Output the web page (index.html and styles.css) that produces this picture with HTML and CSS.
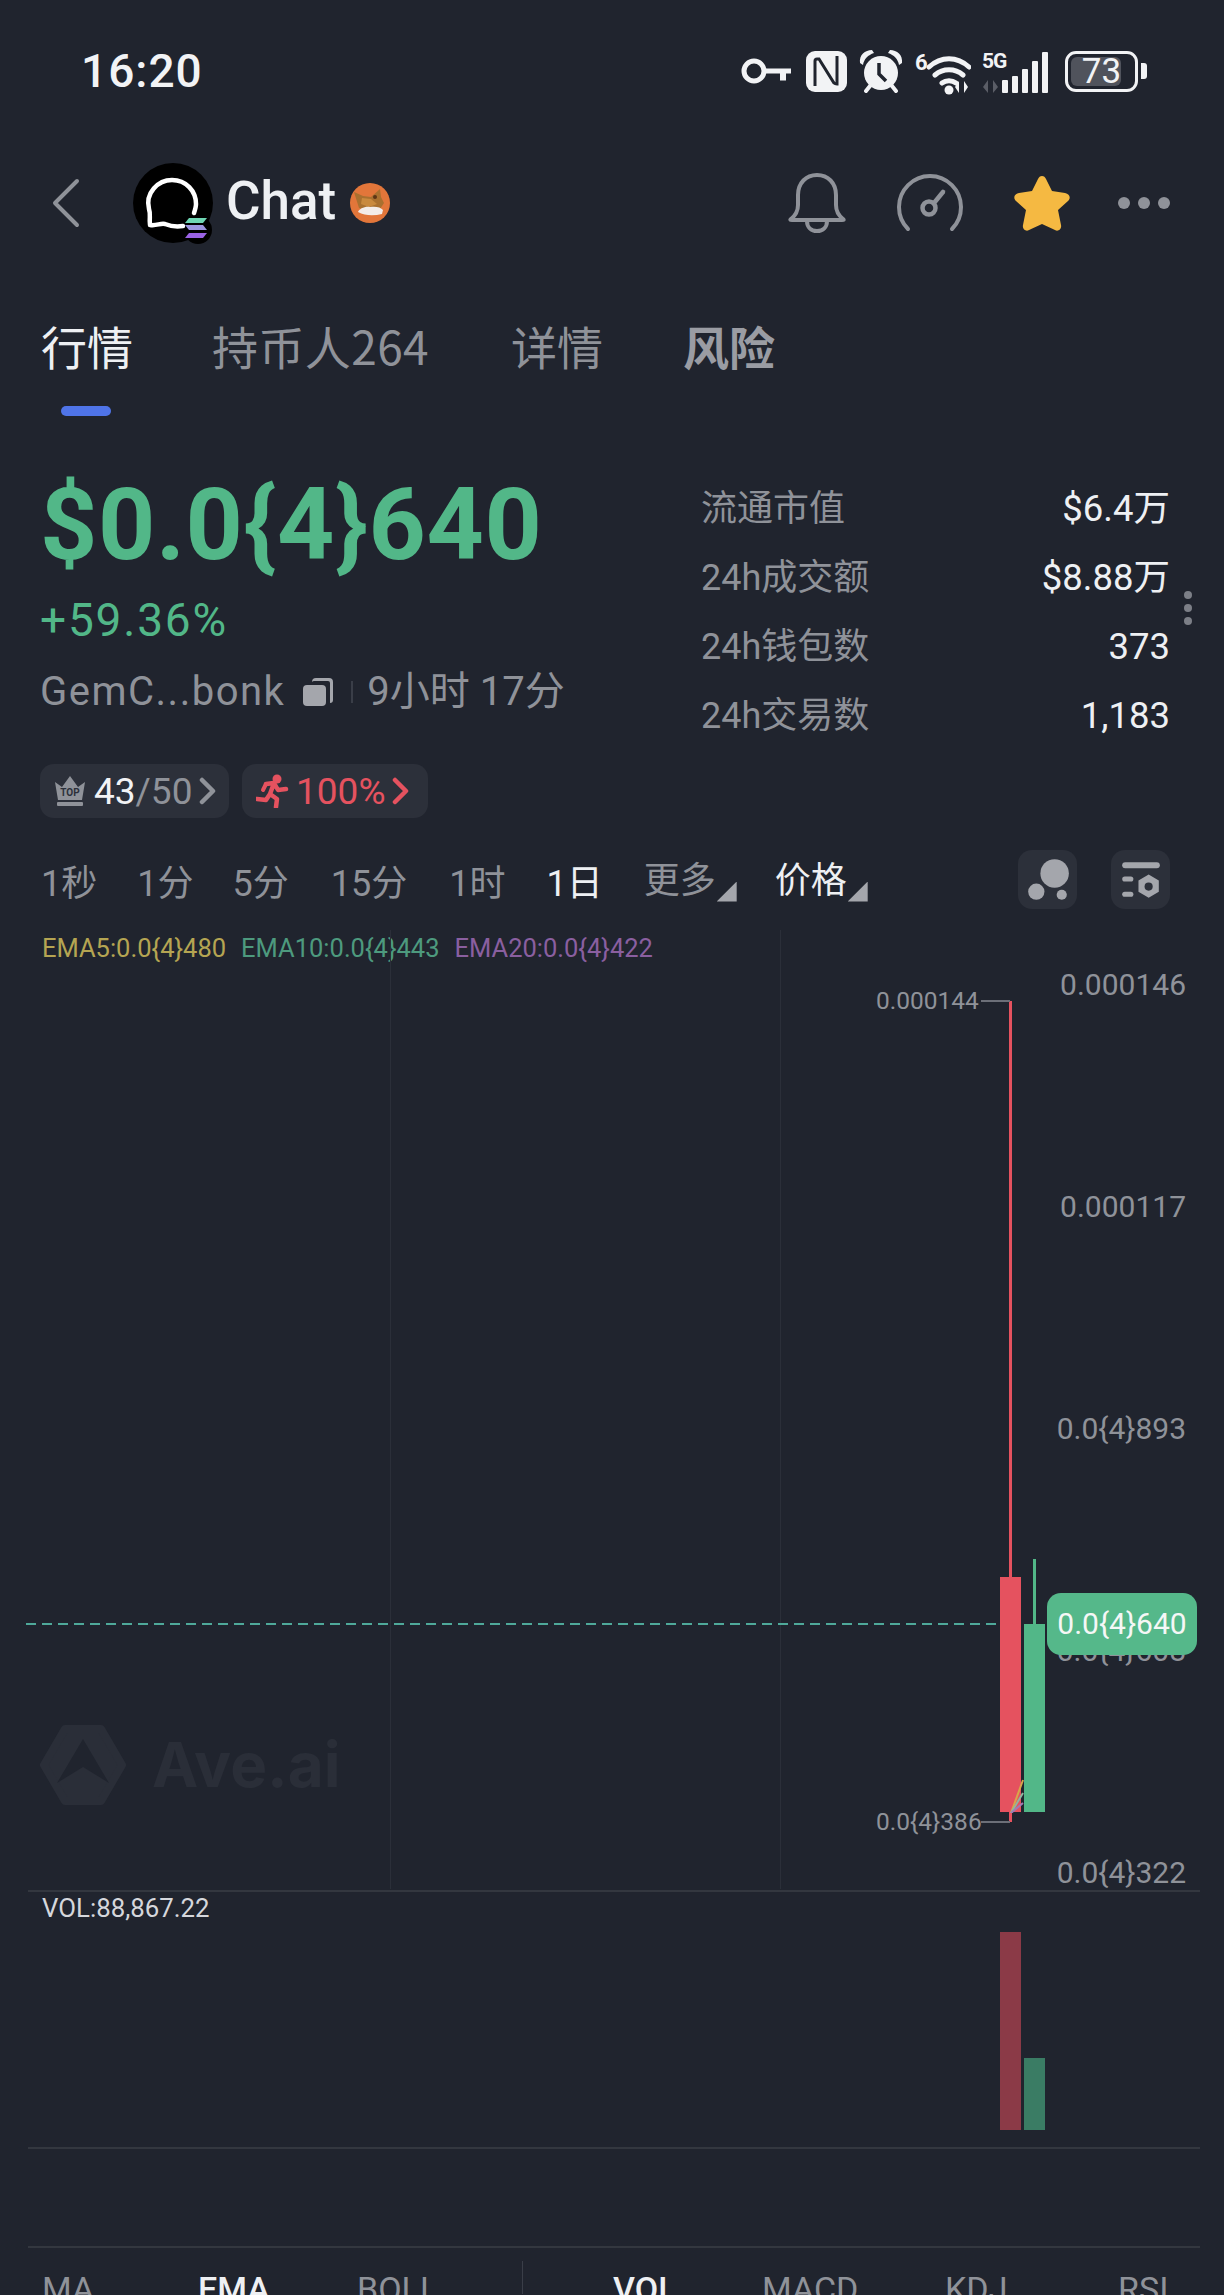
FILE: index.html
```html
<!DOCTYPE html>
<html lang="zh">
<head>
<meta charset="utf-8">
<title>Chat</title>
<link rel="stylesheet" href="styles.css">
</head>
<body>
<div class="page">
  <div class="status">
    <span class="time">16:20</span>
    <div class="status-icons">
      <svg class="si-key" viewBox="0 0 50 28"><circle cx="13" cy="14" r="10" fill="none" stroke="#f2f3f5" stroke-width="5"/><path d="M23 11.500h27v5h-5v7h-6v-7h-16z" fill="#f2f3f5"/></svg>
      <svg class="si-nfc" viewBox="0 0 41 41"><rect width="41" height="41" rx="9" fill="#f2f3f5"/><path d="M9 35V10q0-2 2-2h2l15 24q1 1 3 1V5" fill="none" stroke="#20242e" stroke-width="3"/></svg>
      <svg class="si-alarm" viewBox="0 0 44 44"><circle cx="22" cy="24" r="17" fill="#f2f3f5"/><path d="M1 14C0 6 6 1 13 1l2 3C9 6 5 10 4 16zM43 14c1-8-5-13-12-13l-2 3c6 2 10 6 11 12z" fill="#f2f3f5"/><path d="M11 37l-4 5M33 37l4 5" fill="none" stroke="#f2f3f5" stroke-width="4" stroke-linecap="round"/><path d="M20 14v11l7 7" fill="none" stroke="#20242e" stroke-width="3.500"/></svg>
      <svg class="si-wifi" viewBox="0 -4 56 48"><text x="0" y="19" class="si-mini">6</text><path d="M14 16c12-11 28-11 40 0M20 24c8-7 20-7 28 0M27 32c4-3 10-3 14 0" fill="none" stroke="#f2f3f5" stroke-width="5" stroke-linecap="round"/><circle cx="34" cy="39" r="4.500" fill="#f2f3f5"/><path d="M44 42v-12l-4 6zM49 30v12l4-6z" fill="#f2f3f5"/></svg>
      <svg class="si-signal" viewBox="0 -4 66 46"><text x="0" y="16" class="si-mini si-5g">5G</text><path d="M6 41V28l-5 7zM11 28v13l5-6z" fill="#5a5d66"/><rect x="20" y="28" width="6" height="13" rx="1" fill="#f2f3f5"/><rect x="30" y="24" width="6" height="17" rx="1" fill="#f2f3f5"/><rect x="40" y="17" width="6" height="24" rx="1" fill="#f2f3f5"/><rect x="50" y="9" width="6" height="32" rx="1" fill="#f2f3f5"/><rect x="60" y="0" width="6" height="41" rx="1" fill="#f2f3f5"/></svg>
      <div class="battery"><div class="battery-fill"></div><span class="battery-num">73</span><span class="battery-nub"></span></div>
    </div>
  </div>

  <div class="nav">
    <svg class="back" viewBox="0 0 28 50"><path d="M25 3 3 25l22 22" fill="none" stroke="#8f9299" stroke-width="4" stroke-linecap="round" stroke-linejoin="round"/></svg>
    <svg class="avatar" viewBox="0 0 84 84"><circle cx="40" cy="40" r="40" fill="#000"/><circle cx="65" cy="67" r="14" fill="#000"/><path d="M17 62c-1-8 1-10-1-16-4-16 9-29 23-29 14 0 24 11 24 24 0 3-1 6-2 9M17 62c7 1 10-2 15-1 5 2 12 3 18 2" fill="none" stroke="#fff" stroke-width="4.500" stroke-linecap="round" stroke-linejoin="round"/><path d="M56 55h18l-4 5H52z" fill="#6fd6b4"/><path d="M52 62h18l4 5H56z" fill="#9d95e0"/><path d="M56 70h18l-4 5H52z" fill="#9a62e4"/></svg>
    <span class="token-name">Chat</span>
    <svg class="fox" viewBox="0 0 40 40"><circle cx="20" cy="20" r="20" fill="#e2763a"/><path d="M4 9l9 4 8 1 9-8 1 8 3 6-4 6-10 2-11-3z" fill="#a9702f"/><path d="M12 15l9 1 6 5-8 3-8-3z" fill="#c98a3e"/><path d="M8 29c1-3 7-6 12-5 5-1 11 0 13 3l-1 4c-8 2-17 2-24-2z" fill="#f3ece8"/><circle cx="25" cy="14" r="2" fill="#5c3415"/></svg>
    <div class="nav-actions">
      <svg class="bell" viewBox="0 0 60 60"><path d="M4 46c5-4 7-8 7-14V22C11 10 19 2 30 2s19 8 19 20v10c0 6 2 10 7 14 1 1 1 1-1 1H5c-2 0-2 0-1-1zM20 48c0 6 4 10 10 10s10-4 10-10" fill="none" stroke="#8f9299" stroke-width="4" stroke-linejoin="round"/></svg>
      <svg class="gauge" viewBox="0 0 66 58"><path d="M11 55C5 49 2 41 2 33 2 16 16 2 33 2s31 14 31 31c0 8-3 16-9 22" fill="none" stroke="#8f9299" stroke-width="4" stroke-linecap="round"/><circle cx="32" cy="34" r="6.500" fill="none" stroke="#8f9299" stroke-width="4.500"/><path d="M37 29l9-11" stroke="#8f9299" stroke-width="4.500" stroke-linecap="round"/></svg>
      <svg class="star" viewBox="0 0 58 58"><path d="M29 2c2 0 3 1 4 3l6 12 13 2c5 1 6 5 3 8l-10 9 3 15c1 4-3 7-6 5l-13-6-13 6c-3 2-7-1-6-5l3-15-10-9c-3-3-2-7 3-8l13-2 6-12c1-2 2-3 4-3z" fill="#f5b942"/></svg>
      <div class="more"><i></i><i></i><i></i></div>
    </div>
  </div>

  <div class="tabs">
    <div class="tab tab-active">行情<span class="tab-bar"></span></div>
    <div class="tab tab-holders">持币人264</div>
    <div class="tab tab-detail">详情</div>
    <div class="tab tab-risk">风险</div>
  </div>

  <div class="summary">
    <div class="summary-left">
      <div class="price">$0.0{4}640</div>
      <div class="change">+59.36%</div>
      <div class="token-line">
        <span class="token-addr">GemC...bonk</span>
        <svg class="copy" viewBox="0 0 30 30"><path d="M9 5a4 4 0 0 1 4-4h13a4 4 0 0 1 4 4v18a3 3 0 0 1-3 3V6a2 2 0 0 0-2-2H11a3 3 0 0 0-2 1z" fill="#a4a6ac"/><rect x="0" y="8" width="23" height="21" rx="4" fill="#a4a6ac"/></svg>
        <i class="token-sep"></i>
        <span>9小时 17分</span>
      </div>
    </div>
    <div class="stats">
      <div class="stat"><span>流通市值</span><b>$6.4万</b></div>
      <div class="stat"><span>24h成交额</span><b>$8.88万</b></div>
      <div class="stat"><span>24h钱包数</span><b>373</b></div>
      <div class="stat"><span>24h交易数</span><b>1,183</b></div>
      <div class="vdots"><i></i><i></i><i></i></div>
    </div>
  </div>

  <div class="badges">
    <div class="badge badge-top">
      <svg class="crown" viewBox="0 0 32 32"><path d="M1 7l7 5 8-11 8 11 7-5-3 18H4z" fill="#8f9299"/><rect x="3" y="27" width="26" height="4" rx="1" fill="#8f9299"/><text x="16" y="21" class="crown-text">TOP</text></svg>
      <span class="b-white">43</span><span class="b-grey">/50</span>
      <svg class="chev" viewBox="0 0 17 28"><path d="M3 3l11 11-11 11" fill="none" stroke="#8f9299" stroke-width="4.500" stroke-linecap="round" stroke-linejoin="round"/></svg>
    </div>
    <div class="badge badge-run">
      <svg class="runner" viewBox="0 0 34 34"><circle cx="21" cy="5" r="4.500" fill="#e5525f"/><path d="M10 10l8-1 4 7 8-1M18 9l-4 11 7 5-1 8M14 20l-4 6-9-1" fill="none" stroke="#e5525f" stroke-width="4.500" stroke-linecap="round" stroke-linejoin="round"/><path d="M10 10l-3 6" stroke="#e5525f" stroke-width="4" stroke-linecap="round"/></svg>
      <span class="b-red">100%</span>
      <svg class="chev" viewBox="0 0 17 28"><path d="M3 3l11 11-11 11" fill="none" stroke="#e5525f" stroke-width="4.500" stroke-linecap="round" stroke-linejoin="round"/></svg>
    </div>
  </div>

  <div class="intervals">
    <span class="iv iv-1">1秒</span>
    <span class="iv iv-2">1分</span>
    <span class="iv iv-3">5分</span>
    <span class="iv iv-4">15分</span>
    <span class="iv iv-5">1时</span>
    <span class="iv iv-6 iv-on">1日</span>
    <span class="iv iv-7 iv-drop">更多<i class="tri"></i></span>
    <span class="iv iv-8 iv-drop iv-on">价格<i class="tri"></i></span>
    <div class="tool-btns">
      <div class="tool"><svg viewBox="0 0 58 58"><circle cx="36" cy="23" r="14" fill="#a4a6ac"/><circle cx="18" cy="41" r="8" fill="#a4a6ac"/><circle cx="43" cy="44" r="5" fill="#a4a6ac"/></svg></div>
      <div class="tool"><svg viewBox="0 0 58 58"><rect x="11" y="12" width="37" height="6" rx="3" fill="#a4a6ac"/><rect x="11" y="26" width="11" height="5" rx="2.500" fill="#a4a6ac"/><rect x="11" y="41" width="11" height="5" rx="2.500" fill="#a4a6ac"/><path d="M37 24l10 6v11l-10 6-10-6V30z" fill="#a4a6ac"/><circle cx="37" cy="36" r="4" fill="#2c303a"/></svg></div>
    </div>
  </div>

  <div class="chart">
    <div class="ema-row">
      <span class="ema5">EMA5:0.0{4}480</span>
      <span class="ema10">EMA10:0.0{4}443</span>
      <span class="ema20">EMA20:0.0{4}422</span>
    </div>
    <i class="grid-v gv1"></i><i class="grid-v gv2"></i>
    <i class="grid-h gh1"></i><i class="grid-h gh2"></i><i class="grid-h gh3"></i>
    <div class="watermark">
      <svg viewBox="0 0 86 80"><path d="M25 4h36l21 36-21 36H25L4 40z" fill="#2a2e38" stroke="#2a2e38" stroke-width="8" stroke-linejoin="round"/><path d="M43 14 17 58l26-16 26 16z" fill="#20242e"/></svg>
      <span>Ave.ai</span>
    </div>
    <span class="axis ax1">0.000146</span>
    <span class="axis ax2">0.000117</span>
    <span class="axis ax3">0.0{4}893</span>
    <span class="axis ax4">0.0{4}608</span>
    <span class="axis ax5">0.0{4}322</span>
    <i class="dash"></i>
    <i class="wick wick-red"></i>
    <i class="wick wick-green"></i>
    <i class="candle candle-red"></i>
    <i class="candle candle-green"></i>
    <svg class="ema-lines" viewBox="0 0 14 34"><path d="M1 34 13 1" stroke="#d9a54a" stroke-width="2" fill="none"/><path d="M1 34 13 14" stroke="#8fb5a0" stroke-width="2" fill="none"/><path d="M1 34 13 24" stroke="#a07ab5" stroke-width="2" fill="none"/></svg>
    <span class="mark mark-hi">0.000144</span><i class="mark-line ml-hi"></i>
    <span class="mark mark-lo">0.0{4}386</span><i class="mark-line ml-lo"></i>
    <div class="price-tag">0.0{4}640</div>
    <span class="vol-label">VOL:88,867.22</span>
    <i class="vol vol-red"></i><i class="vol vol-green"></i>
  </div>

  <div class="indicators">
    <span class="ind ind-ma">MA</span>
    <span class="ind ind-ema ind-on">EMA</span>
    <span class="ind ind-boll">BOLL</span>
    <i class="ind-sep"></i>
    <span class="ind ind-vol ind-on">VOL</span>
    <span class="ind ind-macd">MACD</span>
    <span class="ind ind-kdj">KDJ</span>
    <span class="ind ind-rsi">RSI</span>
  </div>
</div>
</body>
</html>
```

FILE: styles.css
```css
* { box-sizing: border-box; }
html, body { margin: 0; padding: 0; background: #20242e; }
body { font-family: Roboto, "Noto Sans CJK SC", sans-serif; color: #eef0f3; }
i { font-style: normal; }
svg { display: block; flex: none; }

.page { width: 1224px; height: 2295px; overflow: hidden; display: flex; flex-direction: column; }

/* status bar */
.status { height: 140px; flex: none; display: flex; align-items: center; justify-content: space-between; padding: 2px 86px 0 81px; }
.time { font-size: 46px; font-weight: 500; letter-spacing: 1px; color: #f2f3f5; }
.status-icons { display: flex; align-items: center; }
.si-key { width: 50px; height: 28px; margin-right: 15px; }
.si-nfc { width: 41px; height: 41px; margin-right: 12px; }
.si-alarm { width: 44px; height: 44px; margin-right: 12px; }
.si-wifi { width: 56px; height: 48px; margin-right: 11px; }
.si-signal { width: 66px; height: 46px; margin-right: 17px; }
.si-mini { font-family: Roboto, sans-serif; font-size: 22px; font-weight: 700; fill: #f2f3f5; }
.si-5g { font-size: 21px; letter-spacing: -1px; }
.battery { position: relative; width: 73px; height: 41px; border: 3.500px solid #f2f3f5; border-radius: 11px; display: flex; align-items: center; justify-content: center; }
.battery-fill { position: absolute; left: 3px; top: 3px; bottom: 3px; width: 50px; background: #50535c; border-radius: 6px; }
.battery-num { position: relative; font-size: 35px; font-weight: 400; color: #f2f3f5; }
.battery-nub { position: absolute; right: -12px; top: 9px; width: 6px; height: 16px; background: #f2f3f5; border-radius: 0 3px 3px 0; }

/* nav */
.nav { height: 126px; flex: none; display: flex; align-items: center; padding: 0 54px 0 52px; }
.back { width: 28px; height: 50px; }
.avatar { width: 84px; height: 84px; margin-left: 53px; position: relative; top: 2px; }
.token-name { font-size: 53px; font-weight: 500; margin-left: 9px; color: #eef0f3; position: relative; top: -2px; }
.fox { width: 40px; height: 40px; margin-left: 14px; }
.nav-actions { margin-left: auto; display: flex; align-items: center; }
.bell { width: 60px; height: 60px; }
.gauge { width: 66px; height: 58px; margin-left: 50px; }
.star { width: 58px; height: 58px; margin-left: 50px; }
.more { display: flex; gap: 8px; margin-left: 47px; }
.more i { width: 12px; height: 12px; border-radius: 50%; background: #8f9299; }

/* tabs */
.tabs { height: 150px; flex: none; display: flex; align-items: flex-start; padding: 50px 0 0 41px; font-family: "Noto Sans CJK SC", Roboto, sans-serif; }
.tab { position: relative; font-size: 46px; line-height: 58px; color: #8f9299; }
.tab-active { color: #eef0f3; width: 92px; }
.tab-holders { margin-left: 79px; letter-spacing: 0.400px; }
.tab-detail { margin-left: 82px; }
.tab-risk { margin-left: 80px; font-weight: 700; color: #9a9ca3; }
.tab-bar { position: absolute; left: 20px; top: 90px; width: 50px; height: 10px; border-radius: 5px; background: #4f74e8; }

/* summary */
.summary { display: flex; flex: none; height: 348px; padding: 54px 54px 0 40px; position: relative; }
.summary-left { width: 661px; flex: none; }
.price { font-size: 100px; line-height: 110px; font-weight: 700; letter-spacing: 0.6px; color: #52b788; }
.change { font-size: 46px; line-height: 54px; margin-top: 13px; color: #52b788; letter-spacing: 1.800px; }
.token-line { display: flex; align-items: center; margin-top: 20px; font-size: 40px; line-height: 50px; color: #8f9299; }
.token-addr { letter-spacing: 1.500px; }
.copy { width: 30px; height: 30px; margin-left: 18px; }
.token-sep { width: 2px; height: 22px; margin: 0 14px 0 18px; background: #3a3e48; }
.stats { flex: 1; padding-top: 4px; }
.stat { height: 69px; line-height: 69px; display: flex; align-items: baseline; justify-content: space-between; font-size: 36px; color: #8f9299; }
.stat b { font-weight: 400; font-size: 36.500px; color: #eef0f3; }
.vdots { position: absolute; right: 32px; top: 175px; display: flex; flex-direction: column; gap: 5px; }
.vdots i { width: 8px; height: 8px; border-radius: 50%; background: #7c7f87; }

/* badges */
.badges { display: flex; gap: 13px; flex: none; height: 54px; margin-left: 40px; }
.badge { display: flex; align-items: center; height: 54px; border-radius: 14px; background: #2c303a; font-size: 37px; padding-left: 14px; }
.badge-top { width: 189px; }
.badge-run { width: 186px; }
.crown { width: 32px; height: 32px; margin-right: 8px; }
.crown-text { font-family: Roboto, sans-serif; font-size: 10px; font-weight: 700; fill: #2c303a; text-anchor: middle; }
.runner { width: 34px; height: 34px; margin-right: 6px; }
.b-white { color: #f2f3f5; }
.b-grey { color: #8f9299; }
.b-red { color: #e5525f; }
.chev { width: 17px; height: 28px; margin-left: 7px; }

/* intervals */
.intervals { display: flex; align-items: center; flex: none; height: 59px; margin-top: 32px; padding: 0 54px 0 41px; font-size: 36px; color: #8f9299; }
.iv-on { color: #eef0f3; }
.iv-2 { margin-left: 40px; }
.iv-3 { margin-left: 39px; }
.iv-4 { margin-left: 42px; }
.iv-5 { margin-left: 42px; }
.iv-6 { margin-left: 41px; }
.iv-7 { margin-left: 41px; }
.iv-8 { margin-left: 38px; }
.iv-drop { position: relative; top: -3px; padding-right: 21px; }
.tri { position: absolute; right: 0; bottom: 1px; width: 20px; height: 20px; background: #a4a6ac; clip-path: polygon(100% 0, 100% 100%, 0 100%); }
.tool-btns { margin-left: auto; display: flex; gap: 34px; }
.tool { width: 59px; height: 59px; border-radius: 14px; background: #2c303a; }
.tool svg { width: 59px; height: 59px; }

/* chart: free canvas, page y 931 is its origin */
.chart { position: relative; flex: none; height: 1331px; margin-top: 21px; }
.ema-row { position: absolute; left: 42px; top: 3px; display: flex; gap: 15px; font-size: 25.500px; line-height: 30px; white-space: nowrap; }
.ema5 { color: #b5a552; }
.ema10 { color: #4d9a7e; }
.ema20 { color: #8a5fa0; }
.grid-v { position: absolute; top: 0; width: 1px; height: 959px; background: #2b2f39; }
.gv1 { left: 390px; }
.gv2 { left: 780px; }
.grid-h { position: absolute; left: 28px; width: 1172px; height: 2px; background: #33373f; }
.gh1 { top: 960px; }
.gh2 { top: 1217px; }
.gh3 { top: 1316px; }
.watermark { position: absolute; left: 40px; top: 795px; display: flex; align-items: center; gap: 26px; }
.watermark svg { width: 86px; height: 80px; }
.watermark span { font-family: Inter, Roboto, sans-serif; font-weight: 700; font-size: 62px; line-height: 80px; color: #2a2e38; }
.axis { position: absolute; right: 38px; font-size: 30px; line-height: 36px; color: #8f9299; }
.ax1 { top: 37px; }
.ax2 { top: 259px; }
.ax3 { top: 481px; }
.ax4 { top: 703px; }
.ax5 { top: 925px; }
.dash { position: absolute; left: 26px; top: 693px; width: 994px; height: 2px; background: repeating-linear-gradient(90deg, #4fa99a 0 10px, transparent 10px 16px); }
.wick { position: absolute; width: 3px; }
.wick-red { left: 1009px; top: 71px; height: 821px; background: #e5525f; }
.wick-green { left: 1033px; top: 629px; height: 66px; background: #52b788; }
.candle { position: absolute; width: 21px; }
.candle-red { left: 1000px; top: 647px; height: 235px; background: #e5525f; }
.candle-green { left: 1024px; top: 694px; height: 188px; background: #52b788; }
.ema-lines { position: absolute; left: 1010px; top: 849px; width: 14px; height: 34px; }
.mark { position: absolute; left: 876px; font-size: 24.500px; line-height: 30px; color: #8f9299; }
.mark-hi { top: 56px; }
.mark-lo { top: 877px; }
.mark-line { position: absolute; left: 981px; width: 29px; height: 2px; background: #6c6f78; }
.ml-hi { top: 70px; }
.ml-lo { top: 891px; }
.price-tag { position: absolute; left: 1047px; top: 663px; width: 150px; height: 62px; border-radius: 14px; background: #55b88a; color: #f5f7f6; font-size: 30px; line-height: 62px; text-align: center; }
.vol-label { position: absolute; left: 42px; top: 963px; font-size: 25.800px; line-height: 30px; color: #d5d7dc; }
.vol { position: absolute; width: 21px; }
.vol-red { left: 1000px; top: 1002px; height: 198px; background: #8b3a47; }
.vol-green { left: 1024px; top: 1128px; height: 72px; background: #3a7c64; }

/* indicators */
.indicators { position: relative; flex: 1; font-size: 34px; line-height: 40px; color: #8f9299; }
.ind { position: absolute; top: 8px; }
.ind-on { color: #eef0f3; font-weight: 500; }
.ind-ma { left: 42px; }
.ind-ema { left: 198px; }
.ind-boll { left: 357px; }
.ind-vol { left: 613px; }
.ind-macd { left: 762px; }
.ind-kdj { left: 945px; }
.ind-rsi { left: 1118px; }
.ind-sep { position: absolute; left: 522px; top: 0; width: 1px; height: 33px; background: #3a3e48; }
```
